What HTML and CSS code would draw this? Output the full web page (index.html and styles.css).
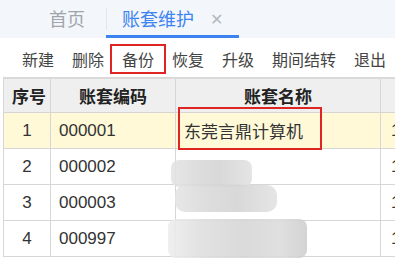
FILE: index.html
```html
<!DOCTYPE html>
<html lang="zh-CN">
<head>
    <meta charset="UTF-8">
    <title>账套维护</title>
    <link rel="stylesheet" href="styles.css">
</head>
<body>
    <div class="page">
        <div class="tabs">
            <a href="#" class="tab">首页</a>
            <a href="#" class="tab active">账套维护 <span class="close">✕</span></a>
        </div>

        <div class="toolbar">
            <a href="#">新建</a>
            <a href="#">删除</a>
            <a href="#" class="marked">备份</a>
            <a href="#">恢复</a>
            <a href="#">升级</a>
            <a href="#">期间结转</a>
            <a href="#">退出</a>
        </div>

        <div class="grid-wrap">
            <table class="grid">
                <thead>
                    <tr>
                        <th class="c-no">序号</th>
                        <th class="c-code">账套编码</th>
                        <th class="c-name">账套名称</th>
                        <th class="c-more"></th>
                    </tr>
                </thead>
                <tbody>
                    <tr class="selected">
                        <td class="c-no">1</td>
                        <td>000001</td>
                        <td>东莞言鼎计算机</td>
                        <td class="c-more">1</td>
                    </tr>
                    <tr>
                        <td class="c-no">2</td>
                        <td>000002</td>
                        <td></td>
                        <td class="c-more">1</td>
                    </tr>
                    <tr>
                        <td class="c-no">3</td>
                        <td>000003</td>
                        <td></td>
                        <td class="c-more">1</td>
                    </tr>
                    <tr>
                        <td class="c-no">4</td>
                        <td>000997</td>
                        <td></td>
                        <td class="c-more">1</td>
                    </tr>
                </tbody>
            </table>
        </div>

        <!-- marcação e borrões sobre a tabela -->
        <div class="mark-name"></div>
        <div class="blur blur-1"></div>
        <div class="blur blur-2"></div>
        <div class="blur blur-3"></div>
    </div>
</body>
</html>
```

FILE: styles.css
```css
body {
    margin: 0;
    background-color: #fff;
    font-family: "Noto Sans CJK SC", "Liberation Sans", sans-serif;
    color: #333;
}

.page {
    position: relative;
    width: 404px;
    height: 266px;
    overflow: hidden;
}

.tabs {
    display: flex;
    align-items: stretch;
    width: 395px;
    height: 38px;
    background-color: #f3f6fa;
    box-sizing: border-box;
    padding-left: 49px;
}

.tab {
    display: flex;
    align-items: center;
    font-size: 18px;
    color: #a0a4ab;
    text-decoration: none;
    padding-bottom: 3px;
}

.tab.active {
    position: relative;
    margin-left: 21px;
    padding: 0 16px;
    color: #3c83f0;
    border-bottom: 3px solid #3c83f0;
}

.tab.active::before {
    content: "";
    position: absolute;
    left: 0;
    top: 8px;
    bottom: 5px;
    border-left: 1px solid #e1e5ec;
}

.close {
    margin-left: 16px;
    font-size: 16px;
    color: #b4b8bf;
}

.toolbar {
    display: flex;
    align-items: center;
    gap: 18px;
    height: 39px;
    box-sizing: border-box;
    padding: 3px 0 0 22px;
}

.toolbar a {
    font-size: 16px;
    line-height: 16px;
    color: #444;
    text-decoration: none;
    position: relative;
}

.toolbar a.marked::after {
    content: "";
    position: absolute;
    left: -12px;
    right: -12px;
    top: -7px;
    bottom: -7px;
    border: 2px solid #e02424;
}

.grid-wrap {
    width: 392px;
    margin-left: 3px;
    overflow: hidden;
}

.grid {
    border-collapse: collapse;
    width: 440px;
    table-layout: fixed;
    border-top: 2px solid #d9d9d9;
}

.grid th,
.grid td {
    border: 1px solid #d6d6d6;
    height: 35px;
    padding: 0 8px;
    text-align: left;
    white-space: nowrap;
    font-size: 17px;
}

.grid th {
    background-color: #efefef;
    color: #222;
    font-weight: bold;
    text-align: center;
    height: 33px;
}

.grid td {
    font-family: "Liberation Sans", "Noto Sans CJK SC", sans-serif;
}

.grid .c-no {
    width: 30px;
    text-align: center;
}

.grid .c-code {
    width: 108px;
}

.grid .c-name {
    width: 188px;
}

.grid td.c-more {
    padding-left: 10px;
}

.grid tr.selected td {
    background-color: #fff9d8;
}

.mark-name {
    position: absolute;
    left: 178px;
    top: 107px;
    width: 140px;
    height: 39px;
    border: 2px solid #e02424;
}

.blur {
    position: absolute;
    border-radius: 8px;
    background: linear-gradient(90deg, #e4e4e4 0%, #dadada 30%, #d4d4d4 60%, #e2e2e2 100%);
    opacity: 0.9;
}

.blur-1 {
    left: 171px;
    top: 160px;
    width: 81px;
    height: 27px;
}

.blur-2 {
    left: 175px;
    top: 185px;
    width: 102px;
    height: 27px;
    border-radius: 10px;
}

.blur-3 {
    left: 168px;
    top: 219px;
    width: 139px;
    height: 39px;
    background: linear-gradient(90deg, #ededed 0%, #dedede 25%, #d6d6d6 55%, #dcdcdc 80%, #cfcfcf 100%);
}
```
